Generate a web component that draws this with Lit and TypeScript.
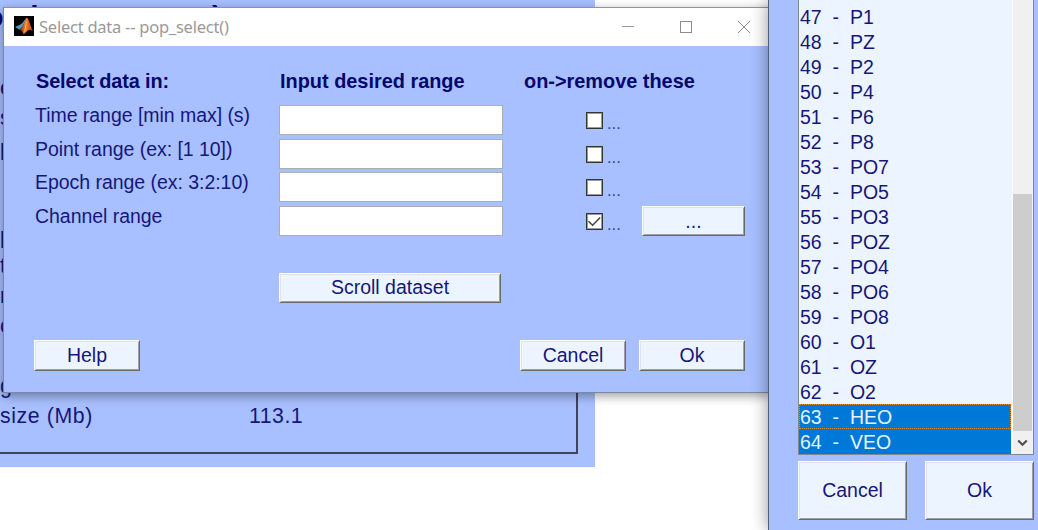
import { LitElement, html, css } from "lit";
import { customElement, property } from "lit/decorators.js";
import { classMap } from "lit/directives/class-map.js";

const channels = [
  "P1", "PZ", "P2", "P4", "P6", "P8", "PO7", "PO5", "PO3", "POZ",
  "PO4", "PO6", "PO8", "O1", "OZ", "O2", "HEO", "VEO",
].map((name, i) => ({ id: 47 + i, name }));

@customElement("bevel-button")
class BevelButton extends LitElement {
  static styles = css`
    :host {
      display: flex;
      align-items: center;
      justify-content: center;
      box-sizing: border-box;
      background: #ecf5ff;
      border: 1px solid;
      border-color: #fff #696969 #696969 #fff;
      box-shadow: inset 1px 1px #e3e3e3, inset -1px -1px #a0a0a0;
      color: #16167a;
    }
  `;
  render() {
    return html`<slot></slot>`;
  }
}

@customElement("check-box")
class CheckBox extends LitElement {
  @property({ type: Boolean }) checked = false;
  static styles = css`
    :host {
      display: flex;
      align-items: flex-start;
      gap: 4px;
      height: 17px;
      color: #2c3bb0;
    }
    .box {
      box-sizing: border-box;
      width: 17px;
      height: 17px;
      border: 1px solid #333;
      box-shadow: inset 0 0 0 1px #9a9a9a;
      background: #fff;
      flex: none;
    }
    svg { display: block; }
    .dots { line-height: 20px; font-size: 16.5px; padding-top: 1px; }
  `;
  render() {
    return html`
      <div class="box">
        ${this.checked
          ? html`<svg width="15" height="15" viewBox="0 0 15 15">
              <path d="M1.5 7.2 L5.6 11.2 L13.2 3.4" fill="none" stroke="#444" stroke-width="1.5" />
            </svg>`
          : null}
      </div>
      <span class="dots">...</span>
    `;
  }
}

@customElement("dataset-window")
class DatasetWindow extends LitElement {
  static styles = css`
    :host {
      display: block;
      box-sizing: border-box;
      overflow: hidden;
      background: #a8c0ff;
      padding-right: 17px;
      color: #16167a;
      font-size: 21.3px;
    }
    .frame {
      box-sizing: border-box;
      height: 414px;
      padding-top: 33px;
      border-right: 2px solid #3c4460;
      border-bottom: 2px solid #3c4460;
      overflow: hidden;
    }
    .title {
      height: 38px;
      padding-top: 2px;
      margin-left: -33px;
      font-size: 30px;
      font-weight: bold;
      line-height: 30px;
      white-space: pre;
      color: #0a0a72;
    }
    .row {
      display: grid;
      grid-template-columns: 249px 1fr;
      height: 30px;
      line-height: 30px;
      white-space: pre;
    }
    .key { letter-spacing: 0.6px; }
    .value { letter-spacing: 0.5px; }
    .gap { height: 58px; }
  `;
  render() {
    const row = (k: string, v = "") =>
      html`<div class="row"><span class="key">${k}</span><span class="value">${v}</span></div>`;
    return html`
      <div class="title">no  dataset name)</div>
      <div class="frame">
        ${["e", "s", "p"].map((k) => row(k))}
        <div class="gap"></div>
        ${["p", "t", "r", "c", ""].map((k) => row(k))}
        ${row("ghts", "No")}
        ${row("size (Mb)", "113.1")}
      </div>
    `;
  }
}

@customElement("select-dialog")
class SelectDialog extends LitElement {
  static styles = css`
    :host {
      display: flex;
      flex-direction: column;
      box-sizing: border-box;
      background: #a8c0ff;
      border: 1px solid #7c88a8;
      border-top-color: #8f949c;
      box-shadow: 0 3px 10px rgba(0, 0, 0, 0.38);
      color: #16167a;
      font-size: 19.5px;
    }
    .bar {
      display: flex;
      align-items: center;
      height: 38px;
      flex: none;
      background: #fff;
      padding: 0 20px 0 10px;
    }
    .bar > svg { margin-bottom: 2px; }
    .name {
      margin: 0 0 2px 5px;
      flex: 1;
      font-family: "Noto Sans", "Open Sans", sans-serif;
      font-size: 16.5px;
      letter-spacing: -0.24px;
      color: #999;
    }
    .controls { display: flex; gap: 46px; }
    svg { display: block; }
    .form {
      display: grid;
      grid-template-columns: 244px 244px 119px 103px;
      grid-template-rows: 41px repeat(4, 33.7px);
      padding: 18px 0 0 31px;
      align-items: start;
    }
    .head {
      font-weight: bold;
      font-size: 19.9px;
      line-height: 22px;
      padding: 6px 0 0 1px;
      color: #06066e;
      white-space: nowrap;
    }
    .first { letter-spacing: -0.12px; }
    .label {
      line-height: 22px;
      margin-top: -1px;
      white-space: nowrap;
      letter-spacing: -0.04px;
    }
    .input {
      box-sizing: border-box;
      width: 223.5px;
      height: 30px;
      background: #fff;
      border: 1px solid #abadb3;
    }
    check-box { margin: 7px 0 0 63px; }
    .pick { height: 30px; }
    .scroll { margin: 33px 0 0 275px; width: 222px; height: 30px; flex: none; }
    .foot {
      display: flex;
      gap: 13px;
      padding: 37px 25px 0 30px;
    }
    .foot bevel-button { width: 106px; height: 31px; }
    .space { flex: 1; }
  `;
  render() {
    const labels = [
      "Time range [min max] (s)",
      "Point range (ex: [1 10])",
      "Epoch range (ex: 3:2:10)",
      "Channel range",
    ];
    return html`
      <div class="bar">
        <svg width="20" height="20" viewBox="0 0 20 20">
          <defs>
            <linearGradient id="flame" x1="0" x2="1">
              <stop offset="0" stop-color="#7a1c10" />
              <stop offset="0.45" stop-color="#f08a2c" />
              <stop offset="0.65" stop-color="#e8641c" />
              <stop offset="1" stop-color="#b8401c" />
            </linearGradient>
          </defs>
          <rect width="20" height="20" fill="#000" />
          <path d="M1 11 L6.2 8.6 C8 8.2 9.5 5.4 12 2.6 L9.4 9.6 L5.6 13.8 Z" fill="#4a9db8" />
          <path d="M5.6 13.8 L9.2 9.4 C10.6 6.6 11.4 2.2 13 1.8 C14.8 2.4 16.4 10.6 19 15.2 C16.8 13.4 15.2 13.2 13.6 14.6 C12 16 11 18 9.4 18.2 C8.8 16 7.6 14 5.6 13.8 Z" fill="url(#flame)" />
          <path d="M13 2.2 C12 6 11.6 11 9.6 16.6 C12 14.4 12.4 8 13 2.2 Z" fill="#f8b860" />
        </svg>
        <span class="name">Select data -- pop_select()</span>
        <div class="controls">
          <svg width="12" height="12"><path d="M0 5.5H12" stroke="#999" /></svg>
          <svg width="12" height="12"><rect x=".5" y=".5" width="11" height="11" fill="none" stroke="#8c8c8c" /></svg>
          <svg width="12" height="12"><path d="M0 0L12 12M12 0L0 12" stroke="#8c8c8c" /></svg>
        </div>
      </div>
      <div class="form">
        <span class="head first">Select data in:</span>
        <span class="head">Input desired range</span>
        <span class="head">on-&gt;remove these</span>
        <span></span>
        ${labels.map(
          (l, i) => html`
            <span class="label">${l}</span>
            <div class="input"></div>
            <check-box ?checked=${i === 3}></check-box>
            ${i === 3 ? html`<bevel-button class="pick">...</bevel-button>` : html`<span></span>`}
          `
        )}
      </div>
      <bevel-button class="scroll">Scroll dataset</bevel-button>
      <div class="foot">
        <bevel-button>Help</bevel-button>
        <span class="space"></span>
        <bevel-button>Cancel</bevel-button>
        <bevel-button>Ok</bevel-button>
      </div>
    `;
  }
}

@customElement("channel-window")
class ChannelWindow extends LitElement {
  static styles = css`
    :host {
      display: flex;
      flex-direction: column;
      gap: 6px;
      box-sizing: border-box;
      background: #a8c0ff;
      border-left: 1px solid #555f7a;
      box-shadow: 0 0 16px rgba(0, 0, 0, 0.42);
      padding: 0 4px 0 29px;
      font-size: 19.5px;
      color: #16167a;
    }
    .list {
      display: flex;
      box-sizing: border-box;
      height: 455px;
      flex: none;
      border: 1px solid #828790;
      border-top: 0;
      background: #ecf5ff;
    }
    .rows { flex: 1; padding-top: 4px; }
    .row {
      box-sizing: border-box;
      height: 25px;
      line-height: 25px;
      padding: 1px 0 0 1px;
      white-space: pre;
    }
    .on { background: #0078d7; color: #e6f2ff; }
    .focus { outline: 1px dotted #e08a3c; outline-offset: -1px; }
    .track {
      display: flex;
      flex-direction: column;
      width: 19px;
      margin: 0 1px;
      background: #f0f0f0;
      border-left: 1px solid #fff;
    }
    .thumb { margin-top: 194px; height: 237px; background: #cdcdcd; }
    svg { display: block; margin: 8px 0 0 4px; }
    .foot { display: flex; gap: 18px; }
    .foot bevel-button { flex: 1; height: 59px; }
  `;
  render() {
    return html`
      <div class="list">
        <div class="rows">
          ${channels.map(
            (c) => html`<div
              class=${classMap({ row: true, on: c.id >= 63, focus: c.id === 63 })}
            >${c.id}  -  ${c.name}</div>`
          )}
        </div>
        <div class="track">
          <div class="thumb"></div>
          <svg width="11" height="9"><path d="M1.2 1.5L5.5 5.8L9.8 1.5" fill="none" stroke="#505050" stroke-width="2.2" /></svg>
        </div>
      </div>
      <div class="foot">
        <bevel-button>Cancel</bevel-button>
        <bevel-button>Ok</bevel-button>
      </div>
    `;
  }
}

@customElement("app-root")
class AppRoot extends LitElement {
  static styles = css`
    :host {
      display: block;
      position: relative;
      width: 1038px;
      height: 530px;
      overflow: hidden;
      background: #fff;
      font-family: "Liberation Sans", Arial, sans-serif;
    }
    dataset-window { position: absolute; left: 0; top: 0; width: 595px; height: 467px; }
    select-dialog { position: absolute; left: 3px; top: 7px; width: 768px; height: 386px; }
    channel-window { position: absolute; left: 768px; top: 0; width: 270px; height: 530px; }
  `;
  render() {
    return html`
      <dataset-window></dataset-window>
      <select-dialog></select-dialog>
      <channel-window></channel-window>
    `;
  }
}
